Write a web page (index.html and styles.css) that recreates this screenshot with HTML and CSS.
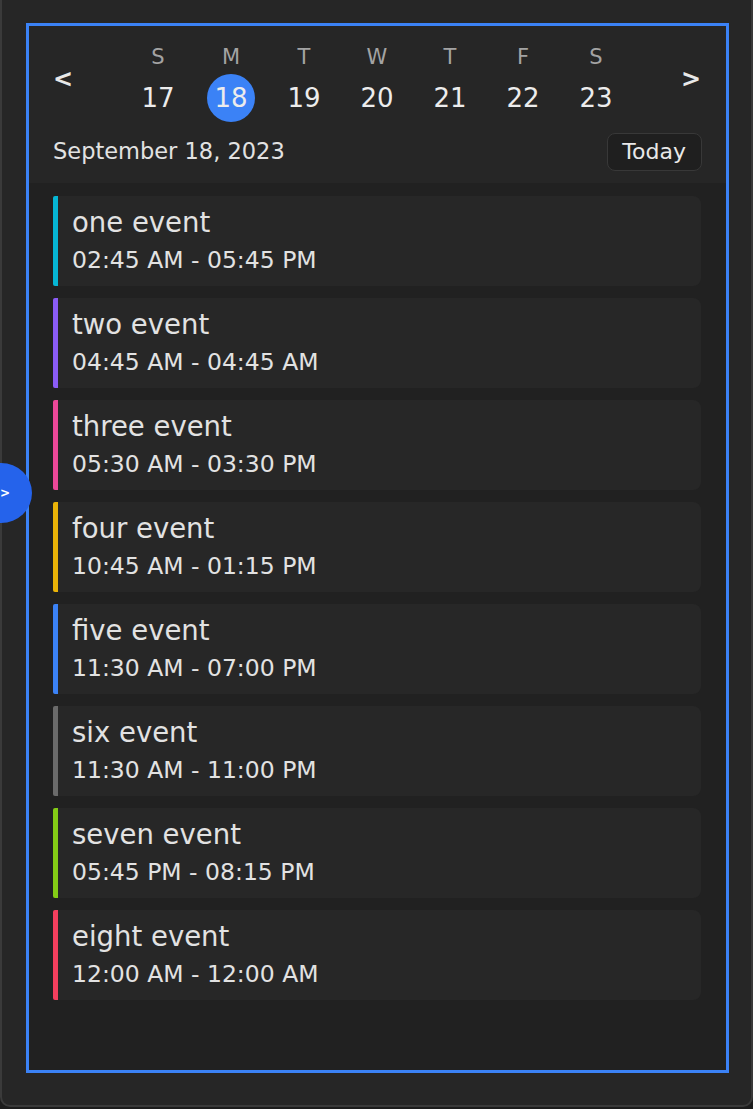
FILE: index.html
```html
<!DOCTYPE html>
<html>
<head>
<meta charset="utf-8">
<link rel="stylesheet" href="styles.css">
</head>
<body>
<div class="panel">
  <div class="toggle">&gt;</div>
  <div class="calendar">
    <div class="header">
      <div class="week-row">
        <span class="arrow">&lt;</span>
        <div class="days">
          <div class="day"><span class="dow">S</span><span class="num">17</span></div>
          <div class="day"><span class="dow">M</span><span class="num active">18</span></div>
          <div class="day"><span class="dow">T</span><span class="num">19</span></div>
          <div class="day"><span class="dow">W</span><span class="num">20</span></div>
          <div class="day"><span class="dow">T</span><span class="num">21</span></div>
          <div class="day"><span class="dow">F</span><span class="num">22</span></div>
          <div class="day"><span class="dow">S</span><span class="num">23</span></div>
        </div>
        <span class="arrow">&gt;</span>
      </div>
      <div class="date-row">
        <span class="date">September 18, 2023</span>
        <button class="today">Today</button>
      </div>
    </div>
    <div class="events">
      <div class="event cyan"><div class="title">one event</div><div class="time">02:45 AM - 05:45 PM</div></div>
      <div class="event purple"><div class="title">two event</div><div class="time">04:45 AM - 04:45 AM</div></div>
      <div class="event pink"><div class="title">three event</div><div class="time">05:30 AM - 03:30 PM</div></div>
      <div class="event amber"><div class="title">four event</div><div class="time">10:45 AM - 01:15 PM</div></div>
      <div class="event blue"><div class="title">five event</div><div class="time">11:30 AM - 07:00 PM</div></div>
      <div class="event grey"><div class="title">six event</div><div class="time">11:30 AM - 11:00 PM</div></div>
      <div class="event green"><div class="title">seven event</div><div class="time">05:45 PM - 08:15 PM</div></div>
      <div class="event red"><div class="title">eight event</div><div class="time">12:00 AM - 12:00 AM</div></div>
    </div>
  </div>
</div>
</body>
</html>
```
FILE: styles.css
```css
* { box-sizing: border-box; }
html, body { margin: 0; padding: 0; }
body {
  background: #1c1c1c;
  font-family: "DejaVu Sans", "Noto Sans", sans-serif;
  color: #e2e2e2;
  width: 753px;
  height: 1109px;
  overflow: hidden;
}
.panel {
  position: relative;
  width: 753px;
  height: 1107px;
  background: #262626;
  border: 2px solid #3a3a3a;
  border-top: none;
  border-radius: 0 0 10px 10px;
  padding: 23px 22px 0 24px;
}
.toggle {
  position: absolute;
  left: -32px;
  top: 463px;
  width: 62px;
  height: 60px;
  border-radius: 50%;
  background: #2563eb;
  color: #fff;
  font-weight: 700;
  font-size: 12px;
  line-height: 60px;
  text-align: right;
  padding-right: 22px;
}
.calendar {
  width: 703px;
  height: 1050px;
  border: 3px solid #3b82f6;
  background: #212121;
  display: flex;
  flex-direction: column;
}
.header {
  background: #262626;
  height: 157px;
  padding: 16px 24px 0 24px;
}
.week-row {
  display: flex;
  align-items: center;
  justify-content: space-between;
}
.arrow {
  font-size: 24px;
  font-weight: 700;
  color: #e8e8e8;
  width: 20px;
  line-height: 1;
  margin-top: -6px;
}
.week-row .arrow:last-child { text-align: right; margin-right: 1px; }
.days {
  display: grid;
  grid-template-columns: repeat(7, 73px);
}
.day {
  display: flex;
  flex-direction: column;
  align-items: center;
}
.dow {
  font-size: 21px;
  line-height: 30px;
  color: #a3a3a3;
}
.num {
  margin-top: 2px;
  width: 48px;
  height: 48px;
  border-radius: 50%;
  font-size: 26px;
  line-height: 48px;
  text-align: center;
  color: #ececec;
}
.num.active { background: #3b82f6; }
.date-row {
  display: flex;
  justify-content: space-between;
  align-items: center;
  margin-top: 11px;
}
.date {
  font-size: 22.5px;
  color: #e2e2e2;
  margin-top: -2px;
}
.today {
  font-family: inherit;
  font-size: 22px;
  color: #e8e8e8;
  background: #1f1f1f;
  border: 1px solid #383838;
  border-radius: 8px;
  height: 38px;
  padding: 0 15px 0 14px;
  line-height: 36px;
}
.events {
  flex: 1;
  padding: 13px 25px 0 24px;
  display: flex;
  flex-direction: column;
  gap: 12px;
}
.event {
  height: 90px;
  background: #272727;
  border-left: 5px solid #888;
  border-radius: 2px 8px 8px 2px;
  padding: 7px 0 0 14px;
}
.title {
  font-size: 27.5px;
  line-height: 38px;
  color: #e2e2e2;
}
.time {
  font-size: 23.5px;
  line-height: 38px;
  color: #e2e2e2;
}
.cyan { border-left-color: #06b6d4; }
.purple { border-left-color: #8b5cf6; }
.pink { border-left-color: #ec4899; }
.amber { border-left-color: #eab308; }
.blue { border-left-color: #3b82f6; }
.grey { border-left-color: #6b6b6b; }
.green { border-left-color: #84cc16; }
.red { border-left-color: #f43f5e; }
```
